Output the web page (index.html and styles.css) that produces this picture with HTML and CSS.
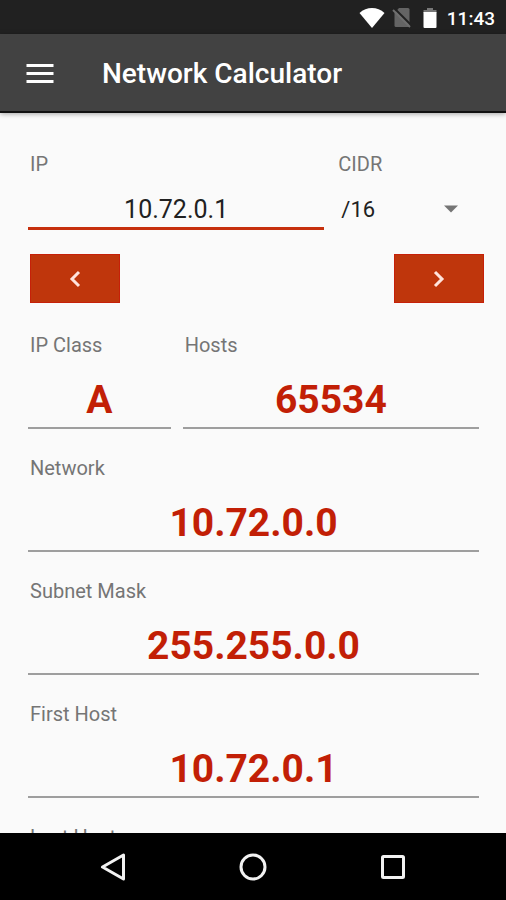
FILE: index.html
```html
<!DOCTYPE html>
<html lang="en">
<head>
<meta charset="utf-8">
<meta name="viewport" content="width=device-width, initial-scale=1">
<title>Network Calculator</title>
<link rel="stylesheet" href="styles.css">
</head>
<body>
<div class="status-bar">
  <svg class="wifi" viewBox="0 0 26 22" aria-hidden="true"><path d="M13 21 0.500 6C4 2.500 8.500 1 13 1s9 1.500 12.500 5z"/></svg>
  <svg class="sim" viewBox="0 0 20 22" aria-hidden="true"><path class="sim-card" d="M7 1h9q1.500 0 1.500 1.500V20H4q-1.500 0-1.500-1.500V6z"/><path class="sim-gap" d="M2.500 1.500l17 17"/><path class="sim-slash" d="M1 3l17 17"/></svg>
  <svg class="battery" viewBox="0 0 16 22" aria-hidden="true"><path class="battery-top" d="M5 1h6v2h3.500v3h-13V3H5z"/><path d="M1.500 5h13v15q0 1-1 1h-11q-1 0-1-1z"/></svg>
  <time>11:43</time>
</div>
<header class="app-bar">
  <button class="menu" type="button" aria-label="Menu">
    <svg viewBox="0 0 28 22" aria-hidden="true"><path d="M0.500 2.500h27M0.500 10.500h27M0.500 18.500h27"/></svg>
  </button>
  <h1>Network Calculator</h1>
</header>
<main>
  <div class="row address-row">
    <div class="field">
      <label for="ip">IP</label>
      <input class="entry" id="ip" type="text" value="10.72.0.1">
    </div>
    <div class="field">
      <label for="cidr">CIDR</label>
      <div class="select-box">
        <select id="cidr">
          <option>/8</option>
          <option selected>/16</option>
          <option>/24</option>
        </select>
        <svg viewBox="0 0 14 8" aria-hidden="true"><path d="M0 0.500h14L7 7.500z"/></svg>
      </div>
    </div>
  </div>
  <div class="stepper">
    <button type="button" aria-label="Previous network"><svg viewBox="0 0 12 18" aria-hidden="true"><path d="M10 2 3 9l7 7"/></svg></button>
    <button type="button" aria-label="Next network"><svg viewBox="0 0 12 18" aria-hidden="true"><path d="m2 2 7 7-7 7"/></svg></button>
  </div>
  <div class="results">
    <div class="row class-row">
      <div class="field">
        <label for="ip-class">IP Class</label>
        <input class="result" id="ip-class" type="text" value="A" readonly>
      </div>
      <div class="field">
        <label for="hosts">Hosts</label>
        <input class="result" id="hosts" type="text" value="65534" readonly>
      </div>
    </div>
    <div class="field">
      <label for="network">Network</label>
      <input class="result" id="network" type="text" value="10.72.0.0" readonly>
    </div>
    <div class="field">
      <label for="mask">Subnet Mask</label>
      <input class="result" id="mask" type="text" value="255.255.0.0" readonly>
    </div>
    <div class="field">
      <label for="first">First Host</label>
      <input class="result" id="first" type="text" value="10.72.0.1" readonly>
    </div>
    <div class="field">
      <label for="last">Last Host</label>
      <input class="result" id="last" type="text" readonly>
    </div>
  </div>
</main>
<nav class="nav-bar" aria-label="System">
  <button type="button" aria-label="Back"><svg viewBox="0 0 28 28" aria-hidden="true"><path d="M24.500 2v24L3.500 14z"/></svg></button>
  <button type="button" aria-label="Home"><svg viewBox="0 0 28 28" aria-hidden="true"><circle cx="14" cy="14" r="12"/></svg></button>
  <button type="button" aria-label="Recent apps"><svg viewBox="0 0 28 28" aria-hidden="true"><rect x="3.500" y="3.500" width="21" height="21" rx="1"/></svg></button>
</nav>
</body>
</html>
```
FILE: styles.css
```css
* {
  box-sizing: border-box;
}

body {
  margin: 0;
  height: 100vh;
  display: flex;
  flex-direction: column;
  overflow: hidden;
  background: #fafafa;
  color: #212121;
  font-family: Roboto, "Liberation Sans", sans-serif;
}

button,
input,
select {
  margin: 0;
  padding: 0;
  border: 0;
  border-radius: 0;
  background: none;
  color: inherit;
  font: inherit;
  outline: 0;
}

svg {
  display: block;
}

.status-bar {
  flex: none;
  height: 34px;
  padding: 2px 11px 0;
  display: flex;
  align-items: center;
  justify-content: flex-end;
  background: #212121;
  color: #fff;
  font-size: 19px;
  font-weight: 500;
}

.status-bar svg {
  height: 22px;
  fill: #fff;
}

.wifi {
  width: 26px;
  margin-right: 7px;
}

.sim {
  width: 20px;
  margin-right: 10px;
}

.status-bar .sim-card {
  fill: #646464;
}

.sim-gap {
  stroke: #212121;
  stroke-width: 2;
}

.sim-slash {
  stroke: #6e6e6e;
  stroke-width: 2;
}

.battery {
  width: 16px;
  margin-right: 9px;
}

.battery-top {
  fill: #777;
}

.app-bar {
  flex: none;
  height: 79px;
  padding: 2px 26px 0;
  display: flex;
  align-items: center;
  gap: 48px;
  background: #424242;
  border-bottom: 2px solid #111;
  box-shadow: 0 1px 5px rgba(0, 0, 0, 0.35);
  color: #fff;
  z-index: 1;
}

.menu svg {
  width: 28px;
  height: 22px;
  stroke: #fff;
  stroke-width: 3;
}

h1 {
  margin: 0;
  font-size: 28px;
  line-height: 32px;
  font-weight: 500;
}

main {
  flex: 1;
  min-height: 0;
  padding: 39px 22px 0 28px;
  overflow: hidden;
}

.row {
  display: grid;
  column-gap: 12px;
}

.address-row {
  grid-template-columns: 27fr 13fr;
  margin-right: 5px;
}

.class-row {
  grid-template-columns: 13fr 27fr;
}

.field {
  min-width: 0;
}

label {
  display: block;
  padding-left: 2px;
  color: #757575;
  font-size: 20px;
  line-height: 24px;
}

.entry,
.result {
  display: block;
  width: 100%;
  text-align: center;
}

.entry {
  height: 54px;
  padding: 17px 0 2px;
  border-bottom: 3px solid #c6300d;
  font-size: 25px;
}

.select-box {
  height: 54px;
  padding-top: 12px;
  display: grid;
  align-items: center;
}

.select-box select {
  grid-area: 1 / 1;
  width: 100%;
  height: 40px;
  padding-left: 5px;
  appearance: none;
  font-size: 22px;
}

.select-box svg {
  grid-area: 1 / 1;
  justify-self: end;
  width: 14px;
  height: 8px;
  margin-right: 21px;
  fill: #757575;
  pointer-events: none;
}

.stepper {
  display: flex;
  justify-content: space-between;
  padding: 24px 0 30px 2px;
}

.stepper button {
  width: 90px;
  height: 49px;
  display: grid;
  place-items: center;
  background: #bf360c;
  border: 1px solid #c62008;
}

.stepper svg {
  width: 12px;
  height: 18px;
  fill: none;
  stroke: #ffe3dc;
  stroke-width: 3;
}

.results {
  display: grid;
  row-gap: 27px;
  margin-right: 5px;
}

.result {
  height: 72px;
  padding: 17px 0 1px;
  border-bottom: 2px solid #9e9e9e;
  color: #c21f06;
  font-size: 39px;
  font-weight: 700;
}

.nav-bar {
  flex: none;
  height: 67px;
  display: flex;
  align-items: center;
  justify-content: center;
  gap: 112px;
  background: #000;
  z-index: 1;
}

.nav-bar svg {
  width: 28px;
  height: 28px;
  fill: none;
  stroke: #f2f2f2;
  stroke-width: 3;
  stroke-linejoin: round;
}
```
